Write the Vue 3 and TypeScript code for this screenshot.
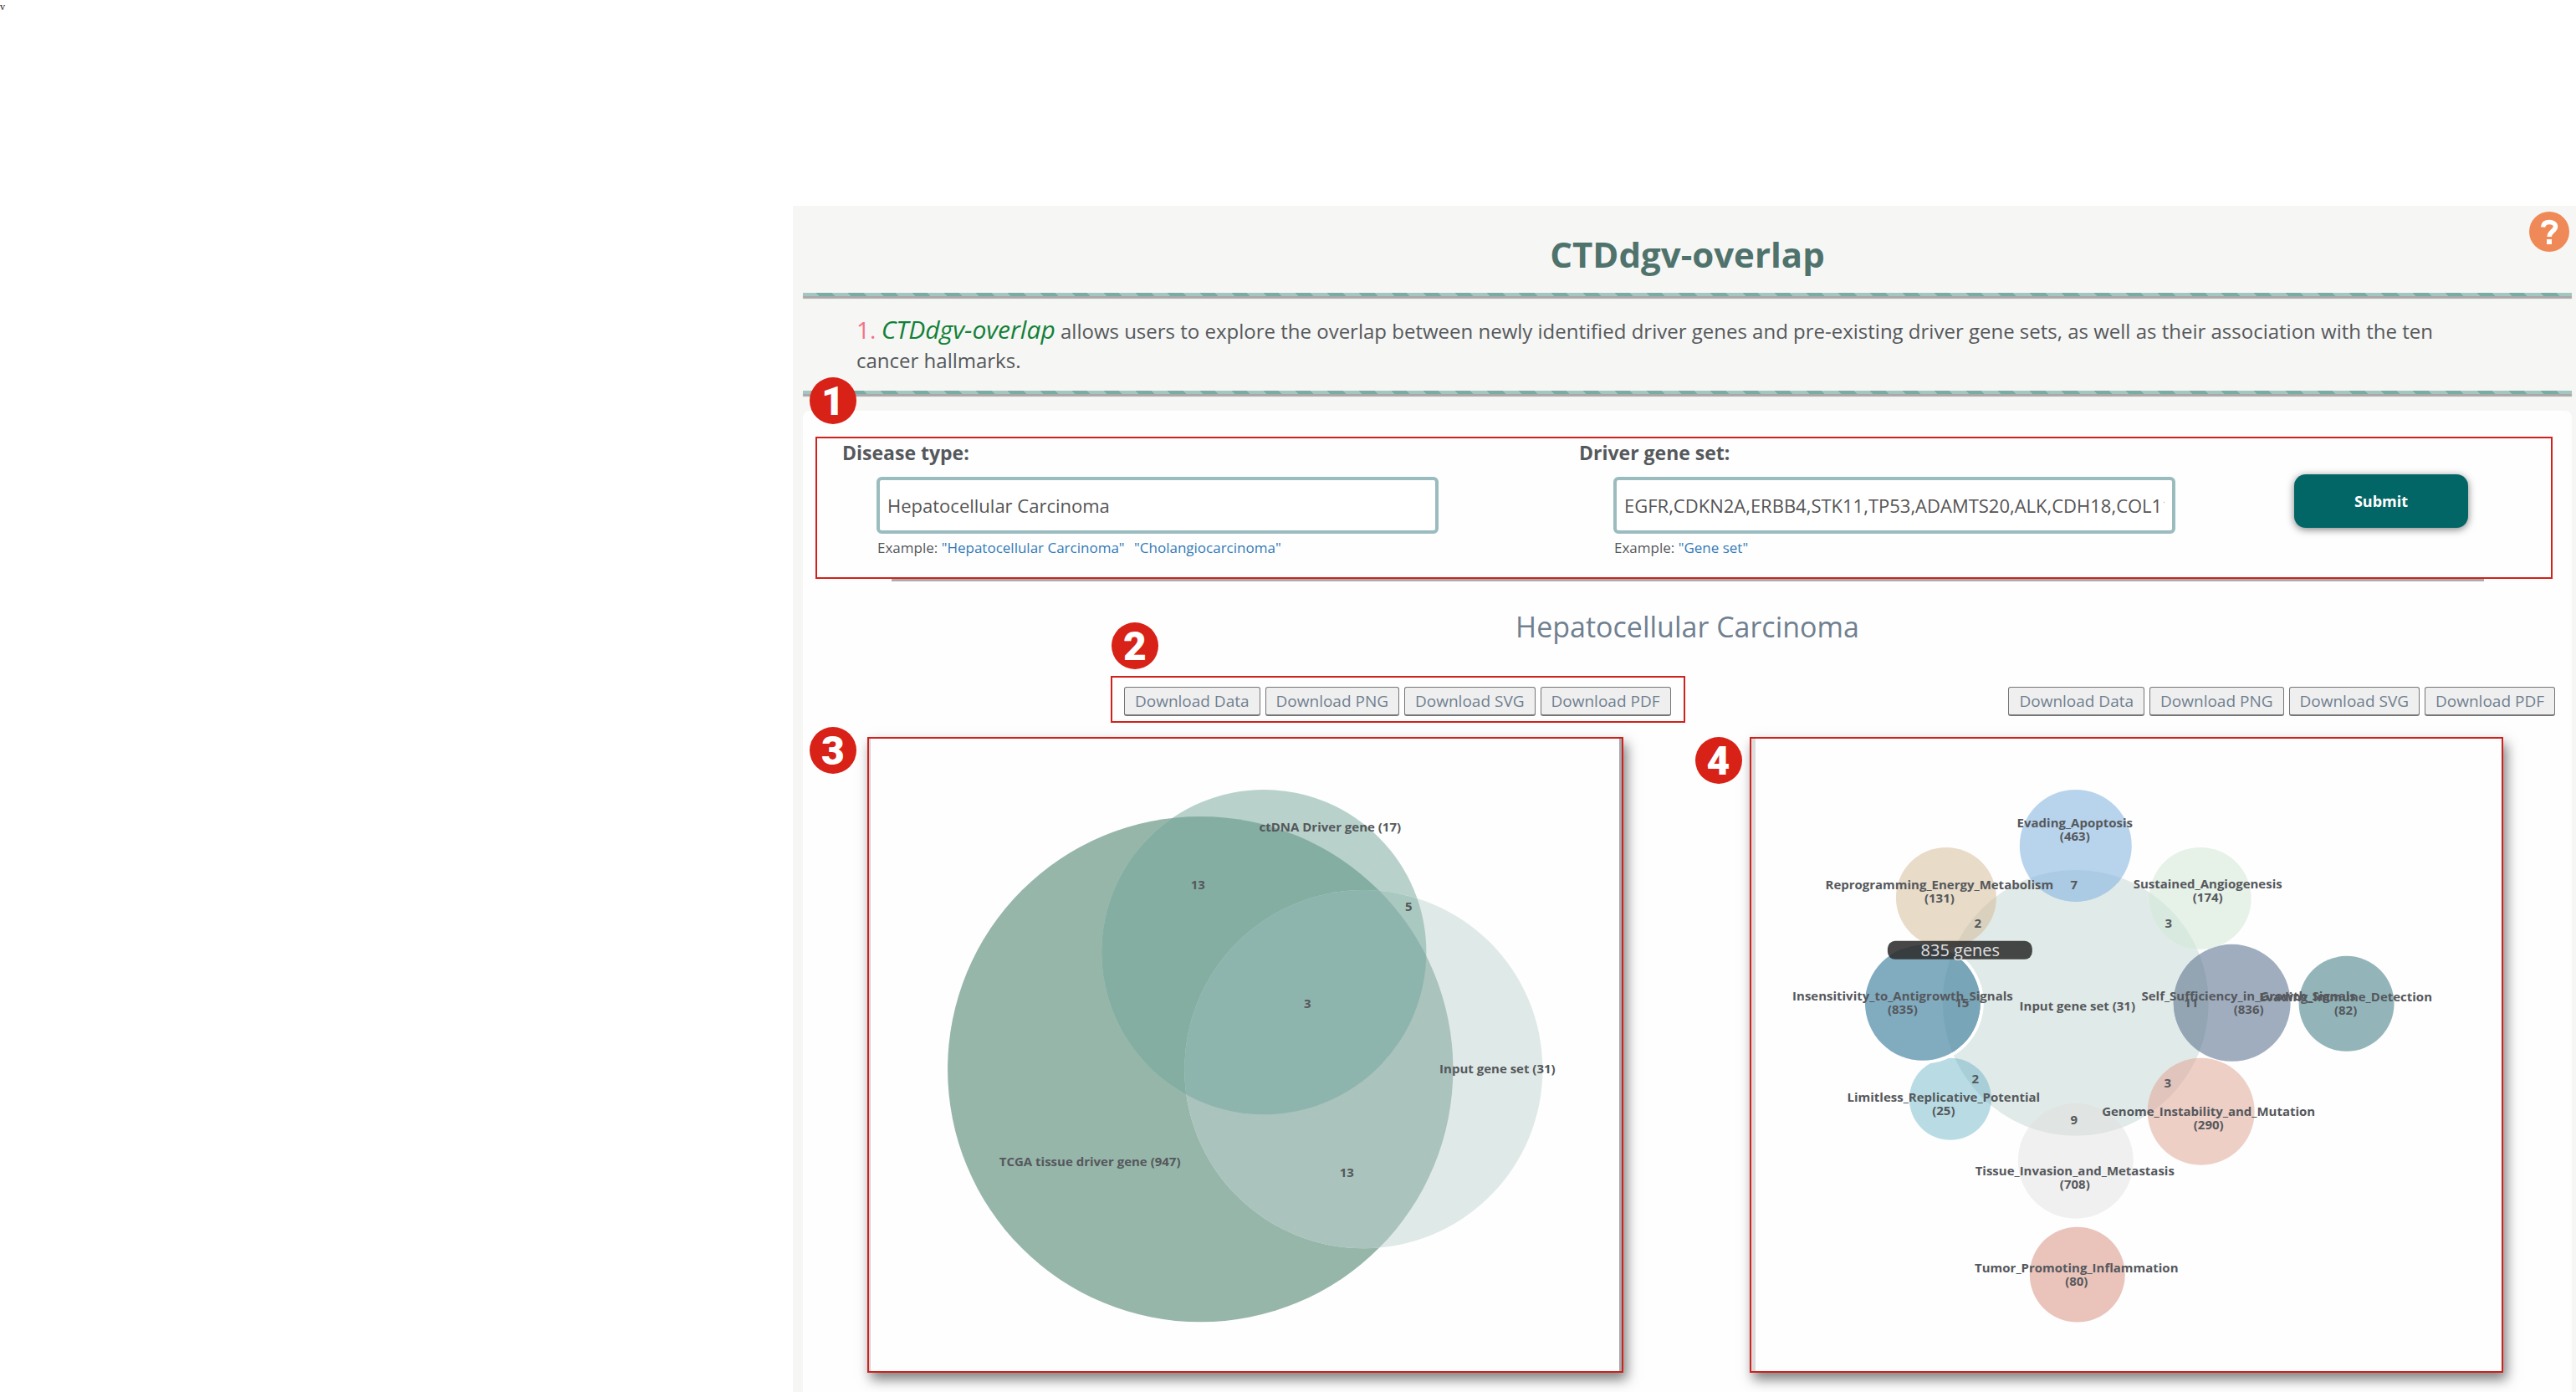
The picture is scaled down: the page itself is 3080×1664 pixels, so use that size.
<script setup lang="ts">
import { ref } from 'vue'

interface Circle { id: string; x: number; y: number; r: number; fill: string; overlap?: string }
interface Label { x: number; y: number; text: string; count?: string }

const disease = ref('Hepatocellular Carcinoma')
const geneSet = ref('EGFR,CDKN2A,ERBB4,STK11,TP53,ADAMTS20,ALK,CDH18,COL11A1,CSMD3')
const downloads: string[] = ['Download Data', 'Download PNG', 'Download SVG', 'Download PDF']

const vennLabels: Label[] = [
  { x: 1590, y: 994, text: 'ctDNA Driver gene (17)' },
  { x: 1303, y: 1394, text: 'TCGA tissue driver gene (947)' },
  { x: 1790, y: 1283, text: 'Input gene set (31)' },
  { x: 1432, y: 1063, text: '13' },
  { x: 1684, y: 1089, text: '5' },
  { x: 1563, y: 1205, text: '3' },
  { x: 1610, y: 1407, text: '13' },
]

const inputSet = { x: 2482, y: 1199, r: 159 }

const hallmarks: Circle[] = [
  { id: 'apoptosis', x: 2482, y: 1011, r: 67, fill: '#b8d4ed', overlap: '#abcae3' },
  { id: 'energy', x: 2327, y: 1073, r: 60, fill: '#e8dbc8', overlap: '#d9d1bd' },
  { id: 'angiogenesis', x: 2631, y: 1074, r: 61, fill: '#e6f1e8', overlap: '#d8eadf' },
  { id: 'growth', x: 2669, y: 1199, r: 70, fill: '#a0adbf', overlap: '#93a4b3' },
  { id: 'immune', x: 2806, y: 1200, r: 57, fill: '#93b5ba' },
  { id: 'genome', x: 2632, y: 1329, r: 64, fill: '#edcfc6', overlap: '#e1c5bc' },
  { id: 'invasion', x: 2482, y: 1388, r: 69, fill: '#f0f0f0', overlap: '#e0e4e3' },
  { id: 'inflammation', x: 2484, y: 1524, r: 57, fill: '#eac4bb' },
  { id: 'replicative', x: 2332, y: 1314, r: 49, fill: '#b9dce4', overlap: '#a8cfd8' },
  { id: 'antigrowth', x: 2299, y: 1199, r: 69, fill: '#81acc0', overlap: '#79a5b8' },
]

const hallmarkLabels: Label[] = [
  { x: 2481, y: 989, text: 'Evading_Apoptosis', count: '(463)' },
  { x: 2319, y: 1063, text: 'Reprogramming_Energy_Metabolism', count: '(131)' },
  { x: 2640, y: 1062, text: 'Sustained_Angiogenesis', count: '(174)' },
  { x: 2275, y: 1196, text: 'Insensitivity_to_Antigrowth_Signals', count: '(835)' },
  { x: 2689, y: 1196, text: 'Self_Sufficiency_in_Growth_Signals', count: '(836)' },
  { x: 2805, y: 1197, text: 'Evading_Immune_Detection', count: '(82)' },
  { x: 2324, y: 1317, text: 'Limitless_Replicative_Potential', count: '(25)' },
  { x: 2641, y: 1334, text: 'Genome_Instability_and_Mutation', count: '(290)' },
  { x: 2481, y: 1405, text: 'Tissue_Invasion_and_Metastasis', count: '(708)' },
  { x: 2483, y: 1521, text: 'Tumor_Promoting_Inflammation', count: '(80)' },
  { x: 2484, y: 1208, text: 'Input gene set (31)' },
  { x: 2480, y: 1063, text: '7' },
  { x: 2365, y: 1109, text: '2' },
  { x: 2593, y: 1109, text: '3' },
  { x: 2346, y: 1204, text: '15' },
  { x: 2620, y: 1204, text: '11' },
  { x: 2362, y: 1295, text: '2' },
  { x: 2592, y: 1300, text: '3' },
  { x: 2480, y: 1344, text: '9' },
]
</script>

<template>
  <div class="page">
    <span class="stray">v</span>
    <main class="panel">
      <header>
        <h1>CTDdgv-overlap</h1>
        <button class="help" type="button" aria-label="Help">
          <svg viewBox="0 0 48 48" aria-hidden="true">
            <circle cx="24" cy="24" r="24" fill="#ef8a58" />
            <path d="M16.500 18.500C17 14.500 19.500 12.500 24 12.500c4.500 0 7.500 2 7.500 5.500 0 5-7.300 5.500-7.300 12" fill="none" stroke="#fff" stroke-width="5.500" />
            <rect x="21" y="33" width="6" height="6" fill="#fff" />
          </svg>
        </button>
        <div class="stripe"></div>
        <p class="intro">
          <span class="num">1.</span> <em>CTDdgv-overlap</em> allows users to explore the overlap between newly identified driver genes and pre-existing driver gene sets, as well as their association with the ten cancer hallmarks.
        </p>
        <div class="stripe"></div>
      </header>

      <div class="content">
        <form class="query" @submit.prevent>
          <span class="badge badge-query">1</span>
          <div class="field">
            <label for="disease">Disease type:</label>
            <input id="disease" v-model="disease" type="text" />
            <p class="example">
              Example: <a href="#">"Hepatocellular Carcinoma"</a> <a class="next" href="#">"Cholangiocarcinoma"</a>
            </p>
          </div>
          <div class="field">
            <label for="genes">Driver gene set:</label>
            <input id="genes" v-model="geneSet" type="text" />
            <p class="example">Example: <a href="#">"Gene set"</a></p>
          </div>
          <button class="submit" type="submit">Submit</button>
        </form>
        <hr />

        <h2>Hepatocellular Carcinoma</h2>

        <div class="results">
          <section class="result">
            <div class="toolbar marked">
              <span class="badge badge-tools">2</span>
              <button v-for="d in downloads" :key="d" type="button">{{ d }}</button>
            </div>
            <div class="frame frame-venn">
              <span class="badge badge-venn">3</span>
              <svg viewBox="1041 883 894 756" role="img" aria-label="Driver gene overlap">
                <defs>
                  <clipPath id="clip-tcga"><circle cx="1435" cy="1278" r="302" /></clipPath>
                  <clipPath id="clip-ctdna"><circle cx="1511" cy="1138" r="194" /></clipPath>
                </defs>
                <circle cx="1435" cy="1278" r="302" fill="#97b6aa" />
                <circle cx="1511" cy="1138" r="194" fill="#b8d2cb" />
                <circle cx="1630" cy="1278" r="214" fill="#dfe9e7" />
                <circle cx="1511" cy="1138" r="194" fill="#85aea2" clip-path="url(#clip-tcga)" />
                <circle cx="1630" cy="1278" r="214" fill="#aac3bc" clip-path="url(#clip-tcga)" />
                <circle cx="1630" cy="1278" r="214" fill="#a8c8c0" clip-path="url(#clip-ctdna)" />
                <g clip-path="url(#clip-ctdna)">
                  <circle cx="1630" cy="1278" r="214" fill="#8eb5ad" clip-path="url(#clip-tcga)" />
                </g>
                <text v-for="l in vennLabels" :key="l.text + l.x" class="label" :x="l.x" :y="l.y">{{ l.text }}</text>
              </svg>
            </div>
          </section>

          <section class="result">
            <div class="toolbar">
              <button v-for="d in downloads" :key="d" type="button">{{ d }}</button>
            </div>
            <div class="frame frame-hallmark">
              <span class="badge badge-hallmark">4</span>
              <svg viewBox="2099 883 893 756" role="img" aria-label="Cancer hallmark overlap">
                <defs>
                  <clipPath id="clip-input"><circle :cx="inputSet.x" :cy="inputSet.y" :r="inputSet.r" /></clipPath>
                </defs>
                <circle :cx="inputSet.x" :cy="inputSet.y" :r="inputSet.r" fill="#e0eae8" />
                <template v-for="c in hallmarks" :key="c.id">
                  <circle v-if="c.id === 'antigrowth'" :cx="c.x" :cy="c.y" :r="c.r + 4" fill="#fff" />
                  <circle :cx="c.x" :cy="c.y" :r="c.r" :fill="c.fill" />
                  <circle v-if="c.overlap" :cx="c.x" :cy="c.y" :r="c.r" :fill="c.overlap" clip-path="url(#clip-input)" />
                </template>
                <g v-for="l in hallmarkLabels" :key="l.text + l.x">
                  <text class="label" :x="l.x" :y="l.y">{{ l.text }}</text>
                  <text v-if="l.count" class="label" :x="l.x" :y="l.y + 16">{{ l.count }}</text>
                </g>
                <rect x="2257" y="1125" width="173" height="22" rx="9" fill="#2d2d2d" fill-opacity="0.880" />
                <text class="tip" x="2344" y="1143">835 genes</text>
              </svg>
            </div>
          </section>
        </div>
      </div>
    </main>
  </div>
</template>

<style>
body {
  margin: 0;
  background: #fff;
}
</style>

<style scoped>
.page {
  position: relative;
  box-sizing: border-box;
  min-height: 100vh;
  padding: 246px 0 0 30.78%;
  display: flex;
  font-family: "Open Sans", "Noto Sans", sans-serif;
  font-size: 24px;
  color: #55585c;
}
.stray {
  position: absolute;
  left: 0;
  top: 0;
  font: 12px/16px "Liberation Serif", serif;
  color: #222;
}
.panel {
  position: relative;
  flex: 1;
  display: flex;
  flex-direction: column;
  padding: 0 5px 0 12px;
  background: #f6f6f4;
}
header {
  padding-bottom: 20px;
}
h1 {
  margin: 0;
  height: 104px;
  line-height: 116px;
  text-align: center;
  font-size: 42px;
  color: #4f736c;
}
.help {
  position: absolute;
  top: 7px;
  right: 8px;
  width: 48px;
  height: 48px;
  padding: 0;
  border: 0;
  background: none;
}
.help svg {
  display: block;
}
.stripe {
  height: 4px;
  background: repeating-linear-gradient(45deg, #a3c6c0 0 14px, #78aca4 14px 27px);
  box-shadow: 0 3px 1px #aaa8a9;
}
.intro {
  box-sizing: border-box;
  height: 113px;
  margin: 0;
  padding: 22px 150px 0 64px;
  line-height: 35px;
}
.num {
  color: #f4708a;
  font-size: 28px;
}
.intro em {
  color: #128138;
  font-size: 30px;
}
.content {
  flex: 1;
  background: #fefefe;
  border-radius: 8px 8px 0 0;
  padding-top: 31px;
}
.query {
  position: relative;
  box-sizing: border-box;
  height: 170px;
  margin: 0 23px 0 15px;
  padding-left: 30px;
  border: 2px solid #d0211c;
  display: grid;
  grid-template-columns: 881fr 855fr 307fr;
}
.field label {
  display: block;
  height: 46px;
  line-height: 34px;
  font-size: 23px;
  font-weight: 700;
}
.field input {
  display: block;
  box-sizing: border-box;
  width: calc(100% - 41px);
  max-width: 672px;
  height: 68px;
  margin-left: 41px;
  padding: 0 9px;
  border: 4px solid #9bbcbf;
  border-radius: 6px;
  background: #fff;
  font: inherit;
  font-size: 22px;
  color: #555;
}
.example {
  margin: 4px 0 0 42px;
  font-size: 17px;
  line-height: 26px;
}
.example a {
  color: #337ab7;
  text-decoration: none;
}
.example .next {
  margin-left: 7px;
}
.submit {
  width: 208px;
  height: 64px;
  margin-top: 43px;
  border: 0;
  border-radius: 14px;
  background: #036666;
  box-shadow: 0 2px 10px rgba(0, 0, 0, 0.5);
  color: #fff;
  font: 700 18px "Open Sans", sans-serif;
}
hr {
  height: 3px;
  margin: 0 105px 0 106px;
  border: 0;
  background: #aaadaf;
}
h2 {
  margin: 0;
  height: 113px;
  line-height: 108px;
  text-align: center;
  font-size: 34px;
  font-weight: 400;
  color: #708090;
}
.results {
  display: grid;
  grid-template-columns: 1fr 1fr;
}
.result {
  display: flex;
  flex-direction: column;
}
.toolbar {
  position: relative;
  box-sizing: border-box;
  align-self: flex-end;
  height: 56px;
  margin-right: 3px;
  padding: 11px 15px 6px 14px;
  border: 2px solid transparent;
  display: flex;
  gap: 6px;
}
.marked {
  border-color: #d0211c;
}
.toolbar button {
  box-sizing: border-box;
  height: 35px;
  padding: 0 12px;
  border: 1px solid #767676;
  border-bottom-width: 2px;
  border-radius: 3px;
  background: #efefef;
  font: 19px "Open Sans", sans-serif;
  color: #708090;
}
.frame {
  position: relative;
  margin-top: 17px;
  border: 2px solid #d0211c;
  box-shadow: 4px 8px 14px rgba(0, 0, 0, 0.5);
}
.frame-venn {
  margin-left: 77px;
  margin-right: 77px;
}
.frame-hallmark {
  margin-left: 74px;
  margin-right: 82px;
}
.frame svg {
  display: block;
  box-sizing: border-box;
  width: 100%;
  height: auto;
}
.frame-venn svg {
  border-left: 2px solid #d4d4d6;
  border-right: 3px solid #a9a9ad;
}
.frame-hallmark svg {
  border-left: 5px solid #dcdcdc;
}
.label {
  font-size: 15px;
  font-weight: 700;
  text-anchor: middle;
  fill: #55585c;
}
.tip {
  font-size: 20px;
  text-anchor: middle;
  fill: #e0e0e0;
}
.badge {
  position: absolute;
  width: 56px;
  height: 56px;
  border-radius: 50%;
  background: #d82117;
  color: #fff;
  text-align: center;
  font: 900 48px/58px Roboto, sans-serif;
}
.badge-query {
  left: -9px;
  top: -73px;
}
.badge-tools {
  left: -1px;
  top: -66px;
}
.badge-venn {
  left: -71px;
  top: -14px;
}
.badge-hallmark {
  left: -67px;
  top: -2px;
}
</style>
